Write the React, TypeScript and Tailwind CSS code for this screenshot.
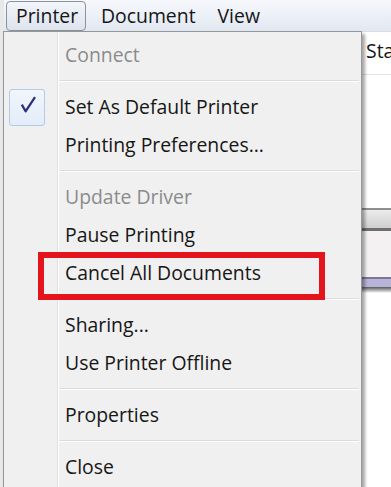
import React from 'react';

type Item = { label: string; disabled?: boolean; checked?: boolean } | 'sep';

const items: Item[] = [
  { label: 'Connect', disabled: true },
  'sep',
  { label: 'Set As Default Printer', checked: true },
  { label: 'Printing Preferences...' },
  'sep',
  { label: 'Update Driver', disabled: true },
  { label: 'Pause Printing' },
  { label: 'Cancel All Documents' },
  'sep',
  { label: 'Sharing...' },
  { label: 'Use Printer Offline' },
  'sep',
  { label: 'Properties' },
  'sep',
  { label: 'Close' },
];

const CheckBox = () => (
  <div className="ml-[5px] flex h-[37px] w-[36px] items-center justify-center rounded-[3px] border border-[#b3cbe6] bg-gradient-to-b from-[#f1f6fc] to-[#e3ecf8]">
    <svg width="36" height="37" viewBox="0 0 36 37">
      <path d="M12.5 15.5 L16.5 22.5 L26.5 7.5" fill="none" stroke="#2b3172" strokeWidth="2.4" strokeLinejoin="round" />
    </svg>
  </div>
);

const App: React.FC = () => {
  return (
    <div className="relative h-[487px] w-[391px] overflow-hidden bg-white font-['Open_Sans',sans-serif] text-[19.4px] text-[#161616]">
      {/* window behind the menu */}
      <div className="flex h-[32px] items-center border-b border-[#d9dde4] bg-gradient-to-b from-[#f6f8fc] to-[#e2e8f2] pl-[4px]">
        <div className="ml-[2px] flex h-[30px] w-[80px] items-center rounded-[4px] border border-[#8b929b] bg-gradient-to-b from-[#f2f5fa] to-[#dde4ee] pl-[9px]">
          Printer
        </div>
        <span className="ml-[15px]">Document</span>
        <span className="ml-[22px]">View</span>
      </div>
      <div className="flex h-[43px] items-center overflow-hidden border-b border-[#e3e3e3] pb-[4px] pl-[366px]">
        <span className="whitespace-nowrap">Status</span>
      </div>
      <div className="h-[133px]" />
      <div className="h-[2px] bg-[#8f8f8f]" />
      <div className="h-[18px] bg-gradient-to-b from-[#ececec] to-[#cfcfcf]" />
      <div className="h-[3px] bg-[#6f6f6f]" />
      <div className="h-[46px] bg-[#f4f1f2]" />
      <div className="h-[2px] bg-[#7a7894]" />
      <div className="h-[8px] bg-[#b7b4d8]" />
      <div className="h-[6px] bg-gradient-to-b from-[#5a5a5a] to-[#ffffff]" />
      <div className="absolute left-0 top-0 h-full w-[4px] bg-[#e8e8e8]" />

      {/* dropdown menu */}
      <div className="absolute left-[3px] top-[31px] h-[470px] w-[359px] border border-[#979797] bg-[#f0f0f0] pt-[4px] shadow-[3px_3px_3px_rgba(0,0,0,0.35)]">
        <div className="absolute bottom-0 left-[53px] top-0 w-[2px] border-l border-[#e0e0e0] bg-white" />
        {items.map((it, i) =>
          it === 'sep' ? (
            <div key={i} className="relative flex h-[14px] items-center pl-[55px] pr-[2px]">
              <div className="h-[2px] w-full border-t border-[#dcdcdc] bg-white" />
            </div>
          ) : (
            <div key={i} className="relative flex h-[38px] items-center">
              <div className="w-[61px] shrink-0">{it.checked && <CheckBox />}</div>
              <span className={it.disabled ? 'text-[#8b8b8b]' : ''}>{it.label}</span>
            </div>
          )
        )}
      </div>

      {/* red highlight around Cancel All Documents */}
      <div className="absolute left-[38px] top-[252px] h-[48px] w-[287px] border-[6px] border-[#e3141c]" />
    </div>
  );
};

export default App;
